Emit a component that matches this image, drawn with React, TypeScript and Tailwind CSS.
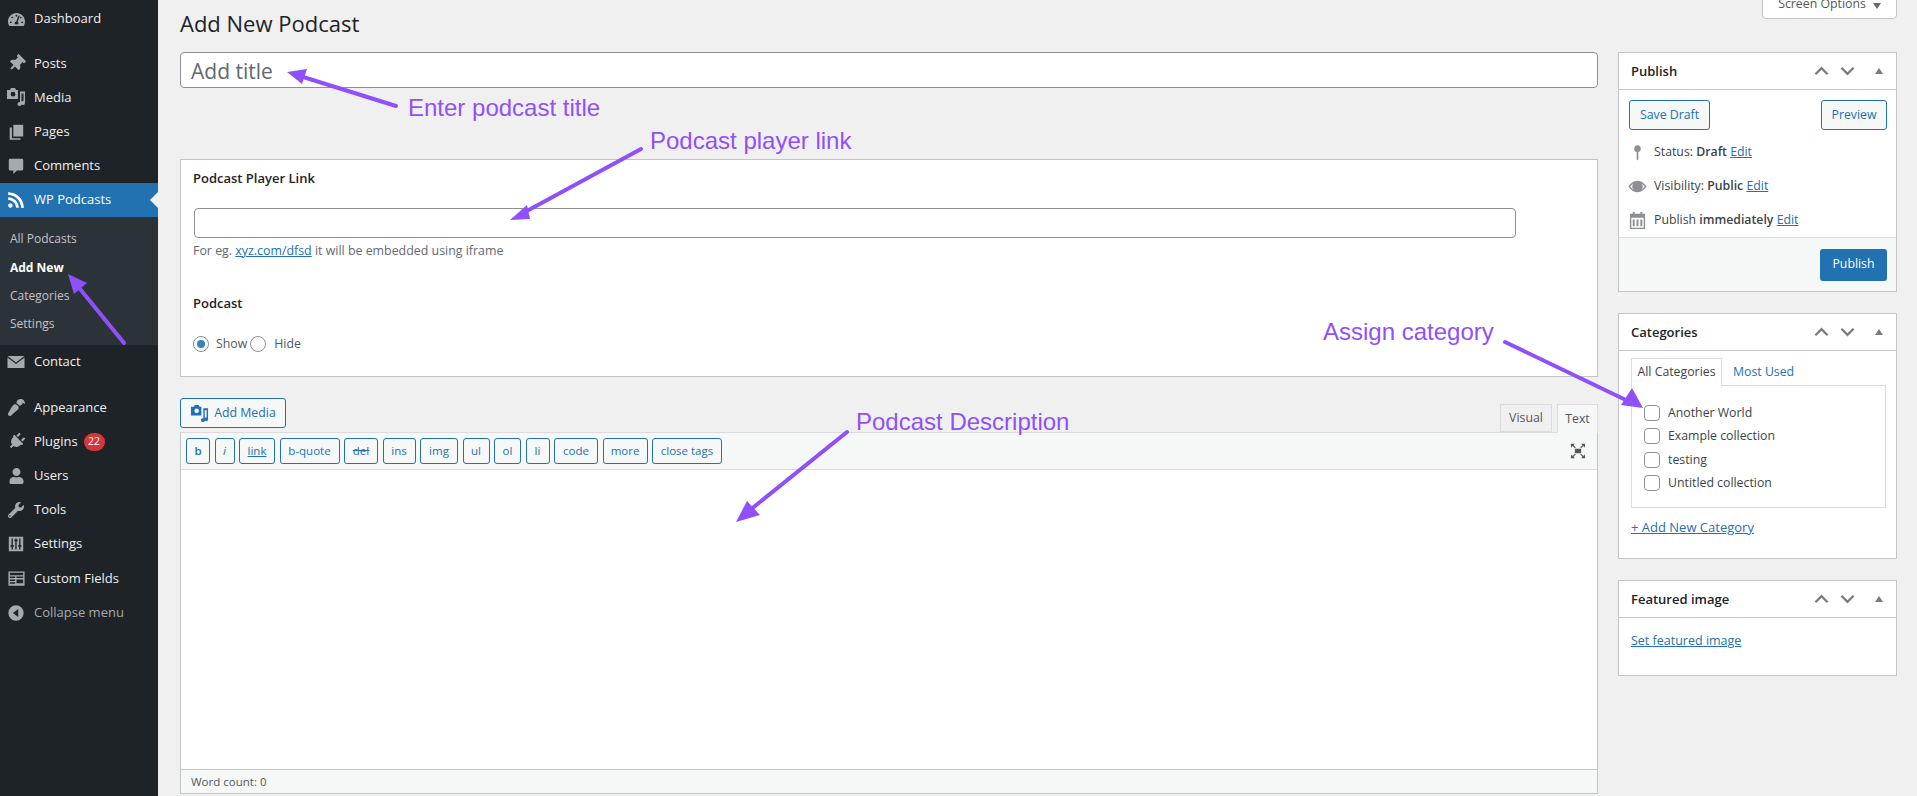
import React from 'react'
import { FaTachometerAlt, FaThumbtack, FaRss, FaPaintBrush, FaPlug, FaUser, FaWrench } from 'react-icons/fa'

function MediaIcon({ className }: { className?: string }) {
  return (
    <svg viewBox="0 0 20 20" className={className} fill="currentColor">
      <path fillRule="evenodd" d="M1 3h3l1-2h4l1 2h2v9H1V3zm6 1.800a2.400 2.400 0 1 0 0 4.800 2.400 2.400 0 0 0 0-4.800z" />
      <path d="M14 5h5v11.500a2 2 0 1 1-1.500-1.900V7h-2v10.500a2 2 0 1 1-1.500-1.900V5z" transform="translate(0 -0.500)" />
    </svg>
  )
}

function PagesIcon({ className }: { className?: string }) {
  return (
    <svg viewBox="0 0 20 20" className={className} fill="currentColor">
      <path d="M7 2h11v13H7z" />
      <path d="M3 5h2.500v12H15v1.500H3z" />
    </svg>
  )
}

function CommentIcon({ className }: { className?: string }) {
  return (
    <svg viewBox="0 0 20 20" className={className} fill="currentColor">
      <path d="M3.500 2h13A1.500 1.500 0 0 1 18 3.500v10a1.500 1.500 0 0 1-1.500 1.500H11l-4 4v-4H3.500A1.500 1.500 0 0 1 2 13.500v-10A1.500 1.500 0 0 1 3.500 2z" />
    </svg>
  )
}

function MailIcon({ className }: { className?: string }) {
  return (
    <svg viewBox="0 0 20 20" className={className} fill="currentColor">
      <path d="M1.500 4h17l-8.500 6.500L1.500 4z" />
      <path d="M1.500 5.500 10 12l8.500-6.500V16h-17z" />
    </svg>
  )
}

function SettingsIcon({ className }: { className?: string }) {
  return (
    <svg viewBox="0 0 20 20" className={className} fill="currentColor">
      <path fillRule="evenodd" d="M2 2h16v16H2V2zm3 2v7H4v2h1v3h1.500v-3h1v-2h-1V4H5zm4.200 0v1h-1v2h1v9h1.500V7h1V5h-1V4H9.200zm4.300 0v7h-1v2h1v3H15v-3h1v-2h-1V4h-1.500z" />
    </svg>
  )
}

function FieldsIcon({ className }: { className?: string }) {
  return (
    <svg viewBox="0 0 20 20" className={className} fill="currentColor">
      <path fillRule="evenodd" d="M1.500 2.500h17v15h-17v-15zM3 4v2.500h14V4H3zm0 4v1.500h5.500V8H3zm7 0v1.500h7V8h-7zM3 11v1.500h5.500V11H3zm7 0v4h7v-4h-7zM3 14v1.500h5.500V14H3z" />
    </svg>
  )
}

function CollapseIcon({ className }: { className?: string }) {
  return (
    <svg viewBox="0 0 20 20" className={className} fill="currentColor">
      <path fillRule="evenodd" d="M10 1.500a8.500 8.500 0 1 1 0 17 8.500 8.500 0 0 1 0-17zM12.500 5.500 6.500 10l6 4.500v-9z" />
    </svg>
  )
}

function PinIcon({ className }: { className?: string }) {
  return (
    <svg viewBox="0 0 20 20" className={className} fill="currentColor">
      <path d="M10 1.500a4 4 0 0 1 1 7.850V18l-1 1.500L9 18V9.350A4 4 0 0 1 10 1.500z" />
    </svg>
  )
}

function EyeIcon({ className }: { className?: string }) {
  return (
    <svg viewBox="0 0 20 20" className={className} fill="currentColor">
      <path fillRule="evenodd" d="M10 4c4.300 0 7.500 3 9.500 6-2 3-5.200 6-9.500 6S2.500 13 .5 10c2-3 5.200-6 9.500-6zM2.400 10c1.400 1.900 3.500 4 5.100 4.600a5 5 0 0 1 0-9.200C5.900 6 3.800 8.100 2.400 10zm10.100-4.600a5 5 0 0 1 0 9.200c1.600-.6 3.700-2.700 5.100-4.600-1.400-1.900-3.500-4-5.100-4.600z" />
    </svg>
  )
}

function CalendarIcon({ className }: { className?: string }) {
  return (
    <svg viewBox="0 0 20 20" className={className} fill="currentColor">
      <path fillRule="evenodd" d="M5 1h2v2h6V1h2v2h3v16H2V3h3V1zM3.500 7v10.500h13V7h-13zM5 9h2v7H5V9zm4 0h2v7H9V9zm4 0h2v7h-2V9z" />
    </svg>
  )
}

function FullscreenIcon({ className }: { className?: string }) {
  return (
    <svg viewBox="0 0 20 20" className={className} fill="currentColor">
      <path d="M6.500 7.500h7v5h-7z" />
      <path d="M2 2h4.500L5 3.500l2.500 2.500-1 1L4 4.500 2.500 6.500 2 2zm16 0-.5 4.500L16 4.500 13.500 7l-1-1L15 3.500 13.500 2H18zM2 18l.5-4.500L4 15.500 6.500 13l1 1L5 16.500 6.500 18H2zm16 0h-4.500l1.500-1.500-2.500-2.500 1-1 2.500 2.500 1.500-2 .5 4.500z" />
    </svg>
  )
}

function Chevron({ up }: { up?: boolean }) {
  return (
    <svg viewBox="0 0 16 10" className="w-[15px] h-[10px] text-[#787c82]" fill="none" stroke="currentColor" strokeWidth="2.400">
      <path d={up ? 'M1.500 8.500 8 2l6.500 6.500' : 'M1.500 1.500 8 8l6.500-6.500'} />
    </svg>
  )
}

function BoxHeader({ title }: { title: string }) {
  return (
    <div className="h-[37px] flex items-center justify-between border-b border-[#c3c4c7] pl-[12px] pr-[13px]">
      <span className="pt-[1px] text-[13px] font-semibold text-[#1d2327]">{title}</span>
      <div className="flex items-center">
        <Chevron up />
        <span className="w-[11px]" />
        <Chevron />
        <span className="w-[20px]" />
        <span className="w-0 h-0 border-l-[4px] border-r-[4px] border-b-[6px] border-l-transparent border-r-transparent border-b-[#787c82]" />
      </div>
    </div>
  )
}

function MenuItem({ icon, label, active, dim, badge }: { icon: React.ReactNode; label: string; active?: boolean; dim?: boolean; badge?: string }) {
  return (
    <div className={`relative h-[34.200px] flex items-center pl-[7px] text-[13px] ${active ? 'bg-[#2271b1] text-white' : dim ? 'text-[#a7aaad]' : 'text-[#f0f0f1]'}`}>
      <span className={`w-[18px] h-[18px] flex items-center justify-center ${active ? 'text-white' : 'text-[#a7aaad]'}`}>{icon}</span>
      <span className="ml-[9px]">{label}</span>
      {badge && (
        <span className="ml-[6px] h-[18px] min-w-[21px] px-[4px] rounded-full bg-[#d63638] text-white text-[10.500px] flex items-center justify-center">{badge}</span>
      )}
      {active && (
        <span className="absolute right-0 top-[9px] w-0 h-0 border-y-[8px] border-r-[8px] border-y-transparent border-r-[#f0f0f1]" />
      )}
    </div>
  )
}

const sub = [
  { label: 'All Podcasts' },
  { label: 'Add New', current: true },
  { label: 'Categories' },
  { label: 'Settings' },
]

const toolbar = [
  { label: 'b', w: 'w-[24px]', cls: 'font-semibold' },
  { label: 'i', w: 'w-[20px]', cls: 'italic' },
  { label: 'link', w: 'w-[36px]', cls: 'underline' },
  { label: 'b-quote', w: 'w-[60px]', cls: '' },
  { label: 'del', w: 'w-[34px]', cls: 'line-through' },
  { label: 'ins', w: 'w-[33px]', cls: '' },
  { label: 'img', w: 'w-[38px]', cls: '' },
  { label: 'ul', w: 'w-[27px]', cls: '' },
  { label: 'ol', w: 'w-[27px]', cls: '' },
  { label: 'li', w: 'w-[24px]', cls: '' },
  { label: 'code', w: 'w-[44px]', cls: '' },
  { label: 'more', w: 'w-[45px]', cls: '' },
  { label: 'close tags', w: 'w-[70px]', cls: '' },
]

const categories = ['Another World', 'Example collection', 'testing', 'Untitled collection']

const outlineBtn = 'border border-[#2271b1] rounded-[3px] bg-[#f6f7f7] text-[#2271b1] flex items-center justify-center'

export default function App() {
  return (
    <div className="relative flex h-[796px] overflow-hidden bg-[#f0f0f1] text-[#3c434a] text-[12.300px] [font-family:'Open_Sans',sans-serif]">
      {/* admin menu */}
      <aside className="w-[158px] shrink-0 bg-[#1d2327] pt-[2px]">
        <MenuItem icon={<FaTachometerAlt className="w-[17px] h-[17px]" />} label="Dashboard" />
        <div className="h-[10px]" />
        <MenuItem icon={<FaThumbtack className="w-[17px] h-[17px] rotate-45" />} label="Posts" />
        <MenuItem icon={<MediaIcon className="w-[20px] h-[20px] shrink-0" />} label="Media" />
        <MenuItem icon={<PagesIcon className="w-[18px] h-[18px]" />} label="Pages" />
        <MenuItem icon={<CommentIcon className="w-[18px] h-[18px]" />} label="Comments" />
        <MenuItem icon={<FaRss className="w-[18px] h-[18px]" />} label="WP Podcasts" active />
        <div className="h-[128px] bg-[#2c3338] pt-[8px]">
          {sub.map((s) => (
            <div key={s.label} className={`h-[28.300px] flex items-center pl-[10px] text-[12px] ${s.current ? 'font-bold text-white' : 'text-[#c3c4c7]'}`}>
              {s.label}
            </div>
          ))}
        </div>
        <MenuItem icon={<MailIcon className="w-[20px] h-[20px] shrink-0" />} label="Contact" />
        <div className="h-[11px]" />
        <MenuItem icon={<FaPaintBrush className="w-[17px] h-[17px] rotate-180" />} label="Appearance" />
        <MenuItem icon={<FaPlug className="w-[17px] h-[17px] rotate-45" />} label="Plugins" badge="22" />
        <MenuItem icon={<FaUser className="w-[15px] h-[16px]" />} label="Users" />
        <MenuItem icon={<FaWrench className="w-[16px] h-[16px]" />} label="Tools" />
        <MenuItem icon={<SettingsIcon className="w-[18px] h-[18px]" />} label="Settings" />
        <MenuItem icon={<FieldsIcon className="w-[19px] h-[19px] shrink-0" />} label="Custom Fields" />
        <MenuItem icon={<CollapseIcon className="w-[18px] h-[18px]" />} label="Collapse menu" dim />
      </aside>

      {/* content */}
      <main className="flex-1 flex gap-[20px] pl-[22px] pr-[20px] min-w-0">
        <div className="flex-1 min-w-0 flex flex-col">
          <h1 className="h-[52px] pb-[6px] flex items-center text-[22px] text-[#1d2327]">Add New Podcast</h1>
          <div className="h-[36px] bg-white border border-[#8c8f94] rounded-[4px] flex items-center pl-[10px] pt-[4px] text-[21px] text-[#646970]">Add title</div>

          <section className="mt-[71px] h-[218px] shrink-0 bg-white border border-[#c3c4c7] pl-[12px] pr-[12px]">
            <div className="pt-[9px] text-[13px] font-semibold text-[#1d2327]">Podcast Player Link</div>
            <div className="mt-[19px] ml-[1px] w-[1322px] h-[30px] bg-white border border-[#8c8f94] rounded-[4px]" />
            <p className="mt-[4px] text-[12.400px] text-[#646970]">
              For eg. <span className="text-[#2271b1] underline">xyz.com/dfsd</span> it will be embedded using iframe
            </p>
            <div className="mt-[34px] text-[13px] font-semibold text-[#1d2327]">Podcast</div>
            <div className="mt-[21px] flex items-center">
              <span className="w-[16px] h-[16px] rounded-full border border-[#8c8f94] flex items-center justify-center">
                <span className="w-[8px] h-[8px] rounded-full bg-[#3582c4]" />
              </span>
              <span className="ml-[7px] text-[#50575e]">Show</span>
              <span className="ml-[3px] w-[16px] h-[16px] rounded-full border border-[#8c8f94]" />
              <span className="ml-[8px] text-[#50575e]">Hide</span>
            </div>
          </section>

          <div className="mt-[21px] h-[34px] shrink-0 flex justify-between">
            <div className={`${outlineBtn} w-[106px] h-[30px] gap-[5px]`}>
              <MediaIcon className="w-[19px] h-[19px]" />
              <span>Add Media</span>
            </div>
            <div className="flex items-end gap-[5px]">
              <div className="w-[52px] h-[28px] bg-[#f0f0f1] border border-[#dcdcde] flex items-center justify-center text-[#50575e]">Visual</div>
              <div className="w-[41px] h-[29px] -mb-px relative bg-[#f6f7f7] border border-[#dcdcde] border-b-0 flex items-center justify-center text-[#50575e]">Text</div>
            </div>
          </div>

          <section className="h-[362px] shrink-0 flex flex-col bg-white border border-[#c3c4c7] border-t-[#dcdcde]">
            <div className="h-[37px] shrink-0 flex items-center justify-between bg-[#f6f7f7] border-b border-[#dcdcde] pl-[5px] pr-[10px]">
              <div className="flex gap-[4.500px]">
                {toolbar.map((b) => (
                  <div key={b.label} className={`${outlineBtn} ${b.w} h-[26px] text-[11.500px] ${b.cls}`}>
                    {b.label}
                  </div>
                ))}
              </div>
              <FullscreenIcon className="w-[18px] h-[18px] text-[#50575e]" />
            </div>
            <div className="flex-1" />
            <div className="h-[24px] shrink-0 flex items-center bg-[#f6f7f7] border-t border-[#c3c4c7] pl-[10px] text-[11.500px] text-[#50575e]">Word count: 0</div>
          </section>
        </div>

        {/* side boxes */}
        <div className="w-[279px] shrink-0 pt-[52px] flex flex-col gap-[21px]">
          <section className="h-[240px] bg-white border border-[#c3c4c7] flex flex-col">
            <BoxHeader title="Publish" />
            <div className="flex-1 pl-[10px] pr-[9px] pt-[10px]">
              <div className="flex justify-between">
                <div className={`${outlineBtn} w-[81px] h-[30px]`}>Save Draft</div>
                <div className={`${outlineBtn} w-[66px] h-[30px]`}>Preview</div>
              </div>
              <div className="mt-[5px] flex flex-col">
                <div className="h-[34px] flex items-center">
                  <span className="w-[17px] flex justify-center"><PinIcon className="w-[17px] h-[17px] shrink-0 text-[#8c8f94]" /></span>
                  <span className="ml-[8px]">Status: <b className="font-semibold">Draft</b> <span className="text-[#2271b1] underline">Edit</span></span>
                </div>
                <div className="h-[34px] flex items-center">
                  <span className="w-[17px] flex justify-center"><EyeIcon className="w-[19px] h-[19px] shrink-0 text-[#8c8f94]" /></span>
                  <span className="ml-[8px]">Visibility: <b className="font-semibold">Public</b> <span className="text-[#2271b1] underline">Edit</span></span>
                </div>
                <div className="h-[34px] flex items-center">
                  <span className="w-[17px] flex justify-center"><CalendarIcon className="w-[19px] h-[19px] shrink-0 text-[#8c8f94]" /></span>
                  <span className="ml-[8px]">Publish <b className="font-semibold">immediately</b> <span className="text-[#2271b1] underline">Edit</span></span>
                </div>
              </div>
            </div>
            <div className="h-[54px] shrink-0 bg-[#f6f7f7] border-t border-[#dcdcde] flex items-center justify-end pr-[9px]">
              <div className="w-[67px] h-[32px] rounded-[3px] bg-[#2271b1] text-white flex items-center justify-center">Publish</div>
            </div>
          </section>

          <section className="h-[246px] bg-white border border-[#c3c4c7]">
            <BoxHeader title="Categories" />
            <div className="px-[12px] pt-[7px]">
              <div className="flex h-[28px]">
                <div className="relative w-[91px] h-[28px] -mb-px bg-white border border-[#dcdcde] border-b-0 z-10 flex items-center justify-center">All Categories</div>
                <div className="pl-[11px] flex items-center text-[#2271b1]">Most Used</div>
              </div>
              <div className="h-[123px] -mt-px border border-[#dcdcde] pl-[12px] pt-[15px] w-[255px]">
                {categories.map((c) => (
                  <div key={c} className="h-[23.500px] flex items-center">
                    <span className="w-[16px] h-[16px] rounded-[4px] border border-[#8c8f94] bg-white shrink-0" />
                    <span className="ml-[8px]">{c}</span>
                  </div>
                ))}
              </div>
              <div className="mt-[10px] text-[13px] text-[#2271b1] underline">+ Add New Category</div>
            </div>
          </section>

          <section className="h-[96px] bg-white border border-[#c3c4c7]">
            <BoxHeader title="Featured image" />
            <div className="pl-[12px] pt-[14px] text-[12.500px] text-[#2271b1] underline">Set featured image</div>
          </section>
        </div>
      </main>

      {/* screen options tab */}
      <div className="absolute top-[-12px] right-[20px] w-[135px] h-[31px] bg-white border border-[#c3c4c7] rounded-b-[4px] flex items-end justify-center pb-[5px] gap-[7px] text-[#50575e]">
        <span>Screen Options</span>
        <span className="w-0 h-0 mb-[4px] border-x-[4px] border-t-[6px] border-x-transparent border-t-[#646970]" />
      </div>

      {/* annotations on top of the screenshot */}
      <svg className="absolute inset-0 w-[1917px] h-[796px] pointer-events-none" viewBox="0 0 1917 796" fill="#8f50fb" stroke="#8f50fb">
        <g strokeWidth="4" strokeLinecap="round">
          <line x1="396" y1="106" x2="300" y2="76" />
          <line x1="641" y1="149" x2="525" y2="212" />
          <line x1="124" y1="343" x2="76" y2="284" />
          <line x1="847" y1="432" x2="750" y2="510" />
          <line x1="1505" y1="342" x2="1630" y2="402" />
        </g>
        <g stroke="none">
          <path d="M287 72 307 69 302 84z" />
          <path d="M510 220 527 205 530 219z" />
          <path d="M68 274 87 283 74 294z" />
          <path d="M736 522 747 501 760 515z" />
          <path d="M1643 408 1621 405 1632 388z" />
        </g>
      </svg>
      <span className="absolute left-[408px] top-[94px] text-[24px] leading-[28px] text-[#8f50fb] [font-family:'Liberation_Sans',sans-serif]">Enter podcast title</span>
      <span className="absolute left-[650px] top-[127px] text-[24px] leading-[28px] text-[#8f50fb] [font-family:'Liberation_Sans',sans-serif]">Podcast player link</span>
      <span className="absolute left-[856px] top-[408px] text-[24px] leading-[28px] text-[#8f50fb] [font-family:'Liberation_Sans',sans-serif]">Podcast Description</span>
      <span className="absolute left-[1323px] top-[318px] text-[24px] leading-[28px] text-[#8f50fb] [font-family:'Liberation_Sans',sans-serif]">Assign category</span>
    </div>
  )
}
